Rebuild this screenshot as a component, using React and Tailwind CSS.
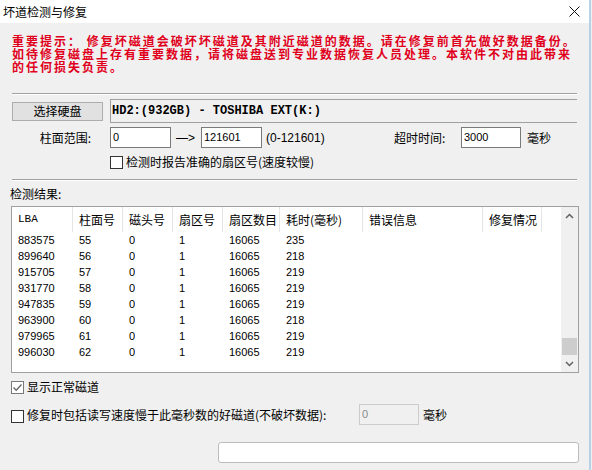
import React from "react";

const UI = { fontFamily: '"Liberation Sans", "Noto Sans CJK SC", sans-serif' };
const CJK = { fontFamily: '"Noto Sans CJK SC", "Liberation Sans", sans-serif' };

const cols = [
  { label: "LBA", w: 61 },
  { label: "柱面号", w: 50 },
  { label: "磁头号", w: 50 },
  { label: "扇区号", w: 50 },
  { label: "扇区数目", w: 57 },
  { label: "耗时(毫秒)", w: 83 },
  { label: "错误信息", w: 120 },
  { label: "修复情况", w: 59 },
];

const rows = [
  ["883575", "55", "0", "1", "16065", "235"],
  ["899640", "56", "0", "1", "16065", "218"],
  ["915705", "57", "0", "1", "16065", "219"],
  ["931770", "58", "0", "1", "16065", "219"],
  ["947835", "59", "0", "1", "16065", "219"],
  ["963900", "60", "0", "1", "16065", "218"],
  ["979965", "61", "0", "1", "16065", "219"],
  ["996030", "62", "0", "1", "16065", "219"],
];

function Separator() {
  return (
    <div className="ml-[12px] w-[565px]">
      <div className="h-px bg-[#a0a0a0]" />
      <div className="h-px bg-white" />
    </div>
  );
}

function Checkbox({ checked }) {
  return (
    <div
      className={
        "w-[13px] h-[13px] bg-white border flex items-center justify-center shrink-0 " +
        (checked ? "border-[#7a7a7a]" : "border-[#333333]")
      }
    >
      {checked && (
        <svg width="11" height="11" viewBox="0 0 11 11">
          <path d="M1.5 5.5 L4.2 8.2 L9.5 2.5" fill="none" stroke="#6a6a6a" strokeWidth="1.4" />
        </svg>
      )}
    </div>
  );
}

function Input({ w, value, disabled }) {
  return (
    <div
      className={
        "h-[21px] border flex items-center pl-[2px] text-[11px] " +
        (disabled
          ? "bg-[#f0f0f0] border-[#cccccc] text-[#8a8a8a]"
          : "bg-white border-[#7a7a7a] text-black")
      }
      style={{ width: w }}
    >
      {value}
    </div>
  );
}

export default function App() {
  return (
    <div className="w-[592px] h-[470px] bg-[#f0f0f0] flex overflow-hidden text-black" style={UI}>
      <div className="w-[589px] flex flex-col">
        {/* Title bar */}
        <div className="h-[23px] bg-white flex items-center justify-between pl-[3px] pr-[9px]">
          <span className="text-[12px] leading-none" style={CJK}>坏道检测与修复</span>
          <svg width="11" height="11" viewBox="0 0 11 11">
            <path d="M0.5 0.5 L10.5 10.5 M10.5 0.5 L0.5 10.5" stroke="#111" strokeWidth="1" />
          </svg>
        </div>

        {/* Warning */}
        <div
          className="mt-[11px] ml-[12px] text-[12px] leading-[13px] font-bold text-[#e0001c] tracking-[2px] whitespace-nowrap"
          style={CJK}
        >
          重要提示： 修复坏磁道会破坏坏磁道及其附近磁道的数据。请在修复前首先做好数据备份。
          <br />
          如待修复磁盘上存有重要数据，请将磁盘送到专业数据恢复人员处理。本软件不对由此带来
          <br />
          的任何损失负责。
        </div>

        <div className="mt-[20px]">
          <Separator />
        </div>

        {/* Drive row */}
        <div className="mt-[4px] h-[24px] flex items-center">
          <div className="ml-[12px] w-[91px] h-[19px] bg-[#e1e1e1] border border-[#adadad] flex items-center justify-center text-[12px]" style={CJK}>
            选择硬盘
          </div>
          <div className="ml-[7px] w-[467px] h-[24px] border-t border-l border-b border-[#a0a0a0] flex items-center pl-[1px]">
            <span className="text-[12px] font-bold whitespace-pre" style={{ fontFamily: '"Liberation Mono", monospace' }}>
              HD2:(932GB) - TOSHIBA EXT(K:)
            </span>
          </div>
        </div>

        {/* Cylinder range row */}
        <div className="mt-[4px] h-[21px] flex items-center text-[12px]">
          <div className="w-[91px] text-right" style={CJK}>柱面范围:</div>
          <div className="ml-[19px]">
            <Input w={61} value="0" />
          </div>
          <div className="w-[30px] pl-[5px] text-[12px] whitespace-nowrap">—&gt;</div>
          <Input w={61} value="121601" />
          <div className="w-[132px] pl-[4px] text-[12px]">(0-121601)</div>
          <div className="w-[67px]" style={CJK}>超时时间:</div>
          <Input w={60} value="3000" />
          <div className="ml-[6px]" style={CJK}>毫秒</div>
        </div>

        {/* Accurate sector checkbox */}
        <div className="mt-[6px] h-[16px] flex items-center ml-[110px] text-[12px]">
          <Checkbox />
          <span className="ml-[3px]" style={CJK}>检测时报告准确的扇区号(速度较慢)</span>
        </div>

        <div className="mt-[9px]">
          <Separator />
        </div>

        <div className="mt-[5px] h-[16px] ml-[10px] text-[12px] leading-[16px]" style={CJK}>检测结果:</div>

        {/* List */}
        <div className="mt-[4px] ml-[11px] w-[568px] h-[167px] border border-[#a0a0a0] bg-white flex">
          <div className="flex-1 flex flex-col">
            <div className="h-[25px] flex items-stretch">
              {cols.map((c) => (
                <div
                  key={c.label}
                  className="flex items-center pl-[6px] text-[12px] border-r border-[#e5e5e5] whitespace-nowrap"
                  style={{ width: c.w, ...CJK }}
                >
                  {c.label === "LBA" ? (
                    <span className="text-[11px]" style={{ fontFamily: '"Liberation Mono", monospace' }}>LBA</span>
                  ) : (
                    c.label
                  )}
                </div>
              ))}
            </div>
            {rows.map((r, i) => (
              <div key={i} className="h-[16px] flex items-center">
                {r.map((v, j) => (
                  <div key={j} className="pl-[6px] text-[11px] leading-[16px]" style={{ width: cols[j].w }}>
                    {v}
                  </div>
                ))}
              </div>
            ))}
          </div>
          {/* Scrollbar */}
          <div className="w-[17px] bg-[#f0f0f0] flex flex-col items-center">
            <div className="h-[17px] w-full flex items-center justify-center">
              <svg width="9" height="6" viewBox="0 0 9 6">
                <path d="M1 5 L4.5 1.5 L8 5" fill="none" stroke="#606060" strokeWidth="1.5" />
              </svg>
            </div>
            <div className="flex-1 w-full flex flex-col justify-end">
              <div className="h-[17px] w-[15px] mx-auto bg-[#cdcdcd]" />
            </div>
            <div className="h-[17px] w-full flex items-center justify-center">
              <svg width="9" height="6" viewBox="0 0 9 6">
                <path d="M1 1 L4.5 4.5 L8 1" fill="none" stroke="#606060" strokeWidth="1.5" />
              </svg>
            </div>
          </div>
        </div>

        {/* Show normal tracks */}
        <div className="mt-[6px] h-[16px] ml-[11px] flex items-center text-[12px]">
          <Checkbox checked />
          <span className="ml-[3px]" style={CJK}>显示正常磁道</span>
        </div>

        {/* Slow tracks */}
        <div className="mt-[9px] h-[21px] ml-[11px] flex items-center text-[12px]">
          <div className="mt-[3px]">
            <Checkbox />
          </div>
          <span className="ml-[3px] w-[332px]" style={CJK}>修复时包括读写速度慢于此毫秒数的好磁道(不破坏数据):</span>
          <Input w={60} value="0" disabled />
          <span className="ml-[4px]" style={CJK}>毫秒</span>
        </div>

        {/* Progress */}
        <div className="mt-[17px] ml-[218px] w-[361px] h-[21px] rounded-[3px] border border-[#bcbcbc] bg-white" />
      </div>
      <div className="w-[2px] bg-[#b7d1e6]" />
      <div className="w-[1px]" />
    </div>
  );
}
